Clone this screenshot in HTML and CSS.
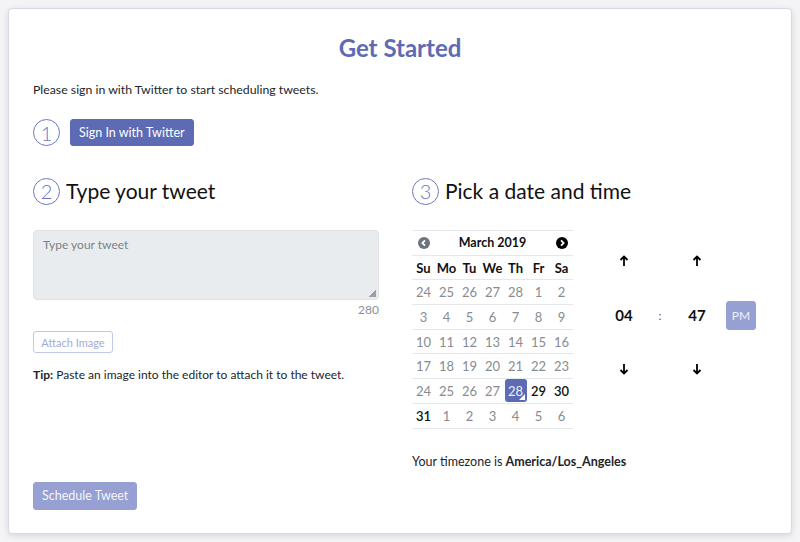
FILE: index.html
```html
<!DOCTYPE html>
<html>
<head>
<meta charset="utf-8">
<link rel="stylesheet" href="styles.css">
</head>
<body>
<div class="card">
  <h1 class="title">Get Started</h1>
  <p class="intro">Please sign in with Twitter to start scheduling tweets.</p>
  <div class="step-row">
    <span class="num">1</span>
    <button class="btn btn-primary">Sign In with Twitter</button>
  </div>
  <div class="cols">
    <div class="col">
      <h2 class="step-head"><span class="num">2</span>Type your tweet</h2>
      <div class="editor">
        <div class="textarea">Type your tweet<span class="grip"></span></div>
        <div class="count">280</div>
      </div>
      <button class="btn btn-outline">Attach Image</button>
      <p class="tip"><b>Tip:</b> Paste an image into the editor to attach it to the tweet.</p>
    </div>
    <div class="col">
      <h2 class="step-head"><span class="num">3</span>Pick a date and time</h2>
      <div class="picker">
        <table class="cal">
          <colgroup><col><col><col><col><col><col><col></colgroup>
          <thead>
            <tr class="cal-head">
              <th><svg class="nav" viewBox="0 0 12 12"><circle cx="6" cy="6" r="6" fill="#6c757d"/><path d="M7 3.3 4.4 6 7 8.7" fill="none" stroke="#fff" stroke-width="1.8"/></svg></th>
              <th colspan="5" class="month">March 2019</th>
              <th><svg class="nav" viewBox="0 0 12 12"><circle cx="6" cy="6" r="6" fill="#000"/><path d="M5 3.3 7.6 6 5 8.7" fill="none" stroke="#fff" stroke-width="1.8"/></svg></th>
            </tr>
            <tr class="dow"><th>Su</th><th>Mo</th><th>Tu</th><th>We</th><th>Th</th><th>Fr</th><th>Sa</th></tr>
          </thead>
          <tbody>
            <tr><td>24</td><td>25</td><td>26</td><td>27</td><td>28</td><td>1</td><td>2</td></tr>
            <tr><td>3</td><td>4</td><td>5</td><td>6</td><td>7</td><td>8</td><td>9</td></tr>
            <tr><td>10</td><td>11</td><td>12</td><td>13</td><td>14</td><td>15</td><td>16</td></tr>
            <tr><td>17</td><td>18</td><td>19</td><td>20</td><td>21</td><td>22</td><td>23</td></tr>
            <tr><td>24</td><td>25</td><td>26</td><td>27</td><td><span class="sel">28</span></td><td class="on">29</td><td class="on">30</td></tr>
            <tr><td class="on">31</td><td>1</td><td>2</td><td>3</td><td>4</td><td>5</td><td>6</td></tr>
          </tbody>
        </table>
        <div class="time">
          <span class="arrow"><svg viewBox="0 0 10 12"><path d="M5 11V2M1.5 5 5 1.5 8.5 5" fill="none" stroke="#000" stroke-width="1.8"/></svg></span>
          <span></span>
          <span class="arrow"><svg viewBox="0 0 10 12"><path d="M5 11V2M1.5 5 5 1.5 8.5 5" fill="none" stroke="#000" stroke-width="1.8"/></svg></span>
          <span></span>
          <span class="val">04</span>
          <span class="colon">:</span>
          <span class="val">47</span>
          <span class="pm-cell"><button class="btn btn-pm">PM</button></span>
          <span class="arrow"><svg viewBox="0 0 10 12"><path d="M5 1v9M1.5 7 5 10.5 8.5 7" fill="none" stroke="#000" stroke-width="1.8"/></svg></span>
          <span></span>
          <span class="arrow"><svg viewBox="0 0 10 12"><path d="M5 1v9M1.5 7 5 10.5 8.5 7" fill="none" stroke="#000" stroke-width="1.8"/></svg></span>
          <span></span>
        </div>
      </div>
      <p class="tz">Your timezone is <b>America/Los_Angeles</b></p>
    </div>
  </div>
  <div class="foot">
    <button class="btn btn-primary disabled">Schedule Tweet</button>
  </div>
</div>
</body>
</html>
```
FILE: styles.css
```css
html, body { margin: 0; padding: 0; }
body {
  background: #f4f4f6;
  font-family: "Lato", "Noto Sans", sans-serif;
  color: #212529;
  padding: 8px;
  height: 542px;
  box-sizing: border-box;
}
.card {
  background: #fff;
  border: 1px solid #d6d9ee;
  border-radius: 4px;
  box-shadow: 0 2px 6px rgba(0,0,0,0.12);
  height: 526px;
  box-sizing: border-box;
  padding: 24px 24px 0 24px;
  display: flex;
  flex-direction: column;
}
.title {
  margin: 0;
  text-align: center;
  font-size: 24px;
  line-height: 30px;
  font-weight: 700;
  color: #5c6bb4;
}
.intro {
  margin: 17px 0 0;
  font-size: 12.3px;
  line-height: 20px;
}
.num {
  display: inline-flex;
  align-items: center;
  justify-content: center;
  width: 25px;
  height: 25px;
  border: 1.5px solid #6b78c2;
  border-radius: 50%;
  color: #6b78c2;
  font-size: 20px;
  font-weight: 300;
  line-height: 1;
  flex: none;
}
.step-row {
  margin-top: 19px;
  display: flex;
  align-items: center;
  gap: 10px;
}
.btn {
  font-family: inherit;
  border-radius: 3px;
  cursor: pointer;
}
.btn-primary {
  background: #5c6bb4;
  color: #fff;
  border: 1px solid #5c6bb4;
  font-size: 12.5px;
  height: 27px;
  padding: 0 8px;
}
.btn-primary.disabled {
  background: #96a0d2;
  border-color: #96a0d2;
  color: #f4f5fb;
}
.cols {
  margin-top: 30px;
  display: grid;
  grid-template-columns: 355px 355px;
  column-gap: 24px;
}
.step-head {
  margin: 0;
  display: flex;
  align-items: center;
  gap: 6px;
  font-size: 21px;
  line-height: 30px;
  font-weight: 400;
  color: #111;
}
.editor {
  margin-top: 24px;
  width: 346px;
}
.textarea {
  position: relative;
  height: 70px;
  box-sizing: border-box;
  background: #e9ecef;
  border: 1px solid #dfe2e6;
  border-radius: 4px;
  padding: 6px 9px;
  font-size: 12px;
  line-height: 16px;
  color: #7c8288;
}
.grip {
  position: absolute;
  right: 2px;
  bottom: 2px;
  width: 7px;
  height: 7px;
  background: linear-gradient(135deg, transparent 50%, #9aa0a6 50%);
}
.count {
  text-align: right;
  font-size: 12px;
  line-height: 16px;
  color: #8a9096;
  margin-top: 2px;
}
.btn-outline {
  margin-top: 13px;
  background: #fff;
  border: 1px solid #c3c8e8;
  color: #a3abd9;
  font-size: 11px;
  height: 22px;
  padding: 0 6px;
  width: 80px;
}
.tip {
  margin: 12px 0 0;
  font-size: 12px;
  line-height: 20px;
}
.picker {
  margin-top: 24px;
  display: flex;
  align-items: flex-start;
}
.cal {
  border-collapse: collapse;
  width: 161px;
  font-size: 13px;
  table-layout: fixed;
}
.cal col { width: 23px; }
.cal th, .cal td {
  padding: 0;
  text-align: center;
  height: 23.7px;
  border-top: 1px solid #e5e7eb;
  white-space: nowrap;
}
.cal td { color: #868c92; }
.cal td.on { color: #111; font-weight: 600; }
.cal-head th { font-weight: 700; font-size: 12.5px; color: #111; }
.dow th { font-weight: 700; font-size: 13px; color: #111; }
.cal tbody tr:last-child td { border-bottom: 1px solid #e5e7eb; }
.nav { width: 12px; height: 12px; display: block; margin: 0 auto; }
.sel {
  position: relative;
  display: flex;
  align-items: center;
  justify-content: center;
  height: 23px;
  width: 22px;
  margin: 0 auto;
  background: #5c6bb4;
  color: #eef0fa;
  border-radius: 3px;
}
.sel::after {
  content: "";
  position: absolute;
  right: 2px;
  bottom: 2px;
  border-left: 6px solid transparent;
  border-bottom: 6px solid #fff;
}
.time {
  margin-left: 27px;
  margin-top: 16px;
  display: grid;
  grid-template-columns: 48px 24px 50px 44px;
  grid-template-rows: 30px 78px 30px;
  align-items: center;
  justify-items: center;
}
.pm-cell { justify-self: start; }
.arrow svg { width: 10px; height: 12px; display: block; }
.val { font-size: 15px; font-weight: 700; color: #111; }
.colon { font-size: 12px; color: #555; }
.btn-pm {
  background: #96a0d2;
  border: 1px solid #96a0d2;
  color: #eef0fa;
  font-size: 12px;
  width: 30px;
  height: 29px;
  padding: 0;
  margin-left: 4px;
  display: block;
}
.tz {
  margin: 23px 0 0;
  font-size: 12.5px;
  line-height: 20px;
}
.tz b { font-weight: 700; }
.foot {
  margin-top: 10px;
}
.foot .btn { height: 28px; padding: 0 8px; }
```
